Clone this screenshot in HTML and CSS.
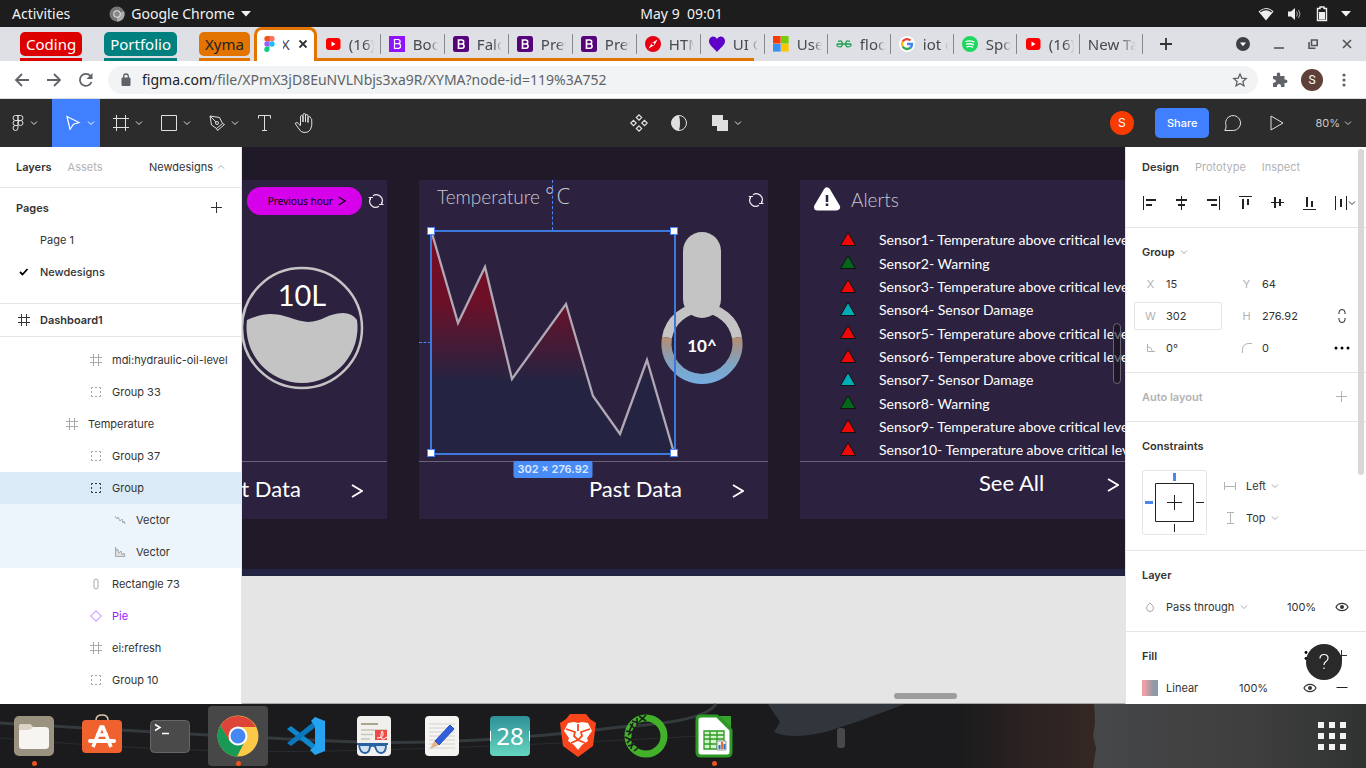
FILE: index.html
```html
<!DOCTYPE html>
<html lang="en">
<head>
<meta charset="utf-8">
<title>XYMA – Figma</title>
<link rel="stylesheet" href="styles.css">
</head>
<body>
<svg class="sprite" aria-hidden="true">
  <symbol id="chev" viewBox="0 0 8 8"><path d="M1 2.500L4 5.500L7 2.500" fill="none" stroke="currentColor"/></symbol>
  <symbol id="chev-up" viewBox="0 0 8 8"><path d="M1 5.500L4 2.500L7 5.500" fill="none" stroke="currentColor"/></symbol>
  <symbol id="plus" viewBox="0 0 12 12"><path d="M5.500 0v11M0 5.500h11" fill="none" stroke="currentColor"/></symbol>
  <symbol id="frame" viewBox="0 0 12 12"><path d="M3.500 0v12M8.500 0v12M0 3.500h12M0 8.500h12" fill="none" stroke="currentColor"/></symbol>
  <symbol id="group" viewBox="0 0 12 12"><path d="M1.500 3V1.500H3M5 1.500h2M9 1.500h1.500V3M10.500 5v2M10.500 9v1.500H9M7 10.500H5M3 10.500H1.500V9M1.500 7V5" fill="none" stroke="currentColor"/></symbol>
  <symbol id="eye" viewBox="0 0 14 10"><path d="M1 5C3.500 .2 10.500 .2 13 5C10.500 9.800 3.500 9.800 1 5Z" fill="none" stroke="currentColor" stroke-width="1.200"/><circle cx="7" cy="5" r="2" fill="currentColor"/></symbol>
  <symbol id="refresh" viewBox="0 0 16 16"><g fill="none" stroke="currentColor" stroke-width="1.200"><path d="M5 2.700A6 6 0 0 1 13.600 10.500M11 13.300A6 6 0 0 1 2.400 5.500"/><path d="M11 11.500H15.500M13.600 9V11.500M.7 4.500H5M2.400 4.500V7"/></g></symbol>
  <symbol id="arrow" viewBox="0 0 12 14"><path d="M1 1L11 7L1 13" fill="none" stroke="currentColor" stroke-width="1.800"/></symbol>
  <symbol id="tri" viewBox="0 0 16 14"><path d="M8 .5L15.500 13.500H.5Z" fill="currentColor" stroke="#111"/></symbol>
  <symbol id="yt" viewBox="0 0 16 16"><rect x="1" y="2" width="14.500" height="12" rx="3" fill="#f00"/><path d="M6.500 5.500L10.500 8L6.500 10.500Z" fill="#fff"/></symbol>
  <symbol id="bs" viewBox="0 0 16 16"><rect width="16" height="16" rx="2.500" fill="#56037c"/><path d="M5.500 4h3.200a2 2 0 0 1 0 4H5.500zM5.500 8h3.500a2.100 2.100 0 0 1 0 4.200H5.500z" fill="none" stroke="#fff" stroke-width="1.600"/></symbol>
  <symbol id="down" viewBox="0 0 10 6"><path d="M0 0H10L5 5.500Z" fill="currentColor"/></symbol>
</svg>

<header class="sysbar">
  <div class="sys-left">
    <button>Activities</button>
    <button class="sys-app"><svg width="16" height="16" viewBox="0 0 16 16"><circle cx="8" cy="8" r="7.500" fill="#777"/><path d="M8 8L15 5A7.500 7.500 0 0 1 8 15.500Z" fill="#aaa"/><circle cx="8" cy="8" r="3.800" fill="#ddd"/><circle cx="8" cy="8" r="2.700" fill="#888"/></svg>Google Chrome<svg width="10" height="6"><use href="#down"/></svg></button>
  </div>
  <button>May 9&nbsp; 09:01</button>
  <div class="sys-right">
    <svg width="16" height="14" viewBox="0 0 16 14"><path d="M.5 4.500Q8-2.500 15.500 4.500L8 13.500Z" fill="#eee"/><path d="M2.300 4.900Q8 .3 13.700 4.900" stroke="#1d1d1d" fill="none" stroke-width="1.200"/></svg>
    <svg width="16" height="14" viewBox="0 0 16 14"><path d="M1 4.500h3L8 1v12L4 9.500H1Z" fill="#eee"/><path d="M9.500 4.500q2 2.500 0 5M11.500 3q3 4 0 8" stroke="#aaa" fill="none"/></svg>
    <svg width="12" height="16" viewBox="0 0 12 16"><path d="M1.500 2.500h2.500v-1.500h4v1.500h2.500v12h-9z" stroke="#eee" fill="none" stroke-width="1.400"/><path d="M3 6h6v7.500H3z" fill="#eee"/></svg>
    <svg width="10" height="6"><use href="#down"/></svg>
  </div>
</header>

<nav class="tabstrip" aria-label="Browser tabs">
  <div class="tabgroup red"><button>Coding</button></div>
  <div class="tabgroup teal"><button>Portfolio</button></div>
  <div class="tabgroup orange"><button>Xyma</button></div>
  <div class="tab-active"><svg width="11" height="16" viewBox="0 0 11 16"><path d="M3 0h3v5.300H3A2.650 2.650 0 0 1 3 0Z" fill="#f24e1e"/><path d="M5.500 0h2.500a2.650 2.650 0 0 1 0 5.300H5.500Z" fill="#ff7262"/><path d="M5.500 5.300H3a2.650 2.650 0 0 0 0 5.300h2.500Z" fill="#a259ff"/><circle cx="8" cy="8" r="2.650" fill="#1abcfe"/><path d="M5.500 10.600H3a2.650 2.650 0 1 0 2.500 2.700Z" fill="#0acf83"/></svg><span class="tab-cut">X</span><button aria-label="Close tab"><svg width="10" height="10" viewBox="0 0 10 10"><path d="M1.500 1.500l7 7M8.500 1.500l-7 7" stroke="#333" stroke-width="1.800"/></svg></button></div>
  <a class="tab grouped" href="#"><svg><use href="#yt"/></svg><span>(16) Y</span></a>
  <a class="tab grouped" href="#"><svg viewBox="0 0 16 16"><path d="M0 0h16v16H0z" fill="#9013fe"/><path d="M5.500 3.500h3.500a2.100 2.100 0 0 1 0 4.200H5.500zM5.500 7.700h3.800a2.300 2.300 0 0 1 0 4.600H5.500z" fill="none" stroke="#fff" stroke-width="1.200"/></svg><span>Boots</span></a>
  <a class="tab grouped" href="#"><svg><use href="#bs"/></svg><span>Falcon</span></a>
  <a class="tab grouped" href="#"><svg><use href="#bs"/></svg><span>Previe</span></a>
  <a class="tab grouped" href="#"><svg><use href="#bs"/></svg><span>Previe</span></a>
  <a class="tab grouped" href="#"><svg viewBox="0 0 16 16"><circle cx="8" cy="8" r="8" fill="#e60012"/><path d="M3.500 12.500L7 7L12.500 3.500L9.500 9Z" fill="#fff"/><circle cx="8" cy="8" r="1.300" fill="#e60012"/></svg><span>HTML</span></a>
  <a class="tab grouped last" href="#"><svg viewBox="0 0 16 16"><path d="M8 16C5 12-.5 9 0 4.500C.8-.5 6.500-.5 8 3C9.500-.5 15.200-.5 16 4.500C16.500 9 11 12 8 16Z" fill="#5f00c8"/></svg><span>UI Gr</span></a>
  <a class="tab" href="#"><svg viewBox="0 0 16 16"><path d="M0 0h7.600v7.600H0z" fill="#f83a04"/><path d="M8 0h7.600v7.600H8z" fill="#7bcc00"/><path d="M0 8h7.600v7.600H0z" fill="#3592f3"/><path d="M8 8h7.600v7.600H8z" fill="#fec400"/></svg><span>User</span></a>
  <a class="tab" href="#"><svg viewBox="0 0 16 16"><path d="M1 8h14M2 5.500q4-2 4.500 2.500q-.5 4-4.500 2.500q-1.500-1-1-2.500M14 5.500q-4-2-4.500 2.500q.5 4 4.500 2.500q1.500-1 1-2.500" fill="none" stroke="#219d50" stroke-width="1.300"/></svg><span>flood</span></a>
  <a class="tab" href="#"><svg viewBox="0 0 16 16"><circle cx="8" cy="8" r="8" fill="#fff"/><g fill="none" stroke-width="2.400"><path d="M3.800 5.500A5 5 0 0 1 11.500 4.500" stroke="#ea4335"/><path d="M3.700 10.500A5 5 0 0 1 3.700 5.500" stroke="#fbbc05"/><path d="M11.500 11.600A5 5 0 0 1 3.700 10.500" stroke="#34a853"/><path d="M8 8h5A5 5 0 0 1 11.300 11.800" stroke="#4285f4"/></g></svg><span>iot da</span></a>
  <a class="tab" href="#"><svg viewBox="0 0 16 16"><circle cx="8" cy="8" r="8" fill="#1ed760"/><path d="M3.500 5.500q5-1.500 9 .8M4 8.200q4.500-1.200 7.800.7M4.500 10.800q3.500-1 6.500.6" fill="none" stroke="#fff" stroke-width="1.300"/></svg><span>Spoti</span></a>
  <a class="tab" href="#"><svg><use href="#yt"/></svg><span>(16) Y</span></a>
  <a class="tab" href="#"><span class="wide">New Tab</span></a>
  <button class="newtab" aria-label="New tab"><svg width="12" height="12" viewBox="0 0 12 12"><path d="M6 0v12M0 6h12" stroke="#333" stroke-width="1.800"/></svg></button>
  <div class="winctl">
    <button aria-label="Search tabs"><svg width="14" height="14" viewBox="0 0 14 14"><circle cx="7" cy="7" r="7" fill="#3c4043"/><path d="M4 5.500h6L7 9.300Z" fill="#fff"/></svg></button>
    <button aria-label="Minimize"><svg width="10" height="10" viewBox="0 0 10 10"><path d="M0 9h10" stroke="#555" stroke-width="1.600"/></svg></button>
    <button aria-label="Restore"><svg width="10" height="10" viewBox="0 0 10 10"><path d="M3.500 1h5.700v5.500H3.500zM1 3v6.200h6.500" fill="none" stroke="#555" stroke-width="1.600"/></svg></button>
    <button aria-label="Close"><svg width="10" height="10" viewBox="0 0 10 10"><path d="M1 1l8 8M9 1l-8 8" stroke="#555" stroke-width="1.700"/></svg></button>
  </div>
</nav>

<div class="urlbar">
  <button aria-label="Back"><svg width="16" height="16" viewBox="0 0 16 16"><path d="M15 8H2M8 2L2 8l6 6" fill="none" stroke="#5f6368" stroke-width="1.800"/></svg></button>
  <button aria-label="Forward"><svg width="16" height="16" viewBox="0 0 16 16"><path d="M1 8h13M8 2l6 6l-6 6" fill="none" stroke="#5f6368" stroke-width="1.800"/></svg></button>
  <button aria-label="Reload"><svg width="16" height="16" viewBox="0 0 16 16"><path d="M13.500 10A6 6 0 1 1 12.500 4" fill="none" stroke="#5f6368" stroke-width="1.800"/><path d="M14.500 1v6h-6Z" fill="#5f6368"/></svg></button>
  <div class="omnibox">
    <svg width="10" height="14" viewBox="0 0 10 14"><path d="M1 5h8v7.500H1z" fill="#5f6368" stroke="#5f6368"/><path d="M2.700 5V3.300a2.300 2.300 0 0 1 4.600 0V5" fill="none" stroke="#5f6368" stroke-width="1.300"/></svg>
    <div class="address"><b>figma.com</b>/file/XPmX3jD8EuNVLNbjs3xa9R/XYMA?node-id=119%3A752</div>
    <button aria-label="Bookmark"><svg width="14" height="14" viewBox="0 0 14 14"><path d="M7 1l1.800 4.100l4.400.4l-3.300 2.900l1 4.400L7 10.500l-3.900 2.300l1-4.400L.8 5.500l4.400-.4Z" fill="none" stroke="#5f6368" stroke-width="1.300"/></svg></button>
  </div>
  <button aria-label="Extensions"><svg width="16" height="16" viewBox="0 0 16 16"><path d="M1 4h4q-1-3.500 1.500-3.500T8 4h4.500v3.500q3-.5 3 1.700t-3 1.800V15H9q.3-3-2-3t-2 3H1v-4q3-.3 3-2t-3-2Z" fill="#5f6368"/></svg></button>
  <button class="profile">S</button>
  <button aria-label="Menu"><svg width="4" height="14" viewBox="0 0 4 14"><g fill="#5f6368"><circle cx="2" cy="2" r="1.600"/><circle cx="2" cy="7" r="1.600"/><circle cx="2" cy="12" r="1.600"/></g></svg></button>
</div>

<div class="toolbar">
  <div class="tools">
    <button class="tool menu" aria-label="Main menu"><svg width="12" height="16" viewBox="0 0 12 16"><path d="M6 .5H3.500a2.500 2.500 0 0 0 0 5H6zM6 .5h2.500a2.500 2.500 0 0 1 0 5H6zM6 5.500H3.500a2.500 2.500 0 0 0 0 5H6zM8.500 5.500a2.500 2.500 0 1 1-2.500 2.500a2.500 2.500 0 0 1 2.500-2.500M6 10.500H3.500a2.500 2.500 0 1 0 2.500 2.500z" fill="none" stroke="currentColor"/></svg><svg class="c"><use href="#chev"/></svg></button>
    <button class="tool on" aria-label="Move"><svg width="16" height="16" viewBox="0 0 16 16"><path d="M2 1.500L14 7.500L8.500 9.200L5 14.300Z" fill="none" stroke="currentColor" stroke-width="1.200"/></svg><svg class="c"><use href="#chev"/></svg></button>
    <button class="tool" aria-label="Frame"><svg width="16" height="16" viewBox="0 0 16 16"><path d="M3.500 0v16M12.500 0v16M0 3.500h16M0 12.500h16" stroke="currentColor"/></svg><svg class="c"><use href="#chev"/></svg></button>
    <button class="tool" aria-label="Rectangle"><svg width="16" height="16" viewBox="0 0 16 16"><path d="M.5.5h15v15H.5z" fill="none" stroke="currentColor"/></svg><svg class="c"><use href="#chev"/></svg></button>
    <button class="tool" aria-label="Pen"><svg width="16" height="16" viewBox="0 0 16 16"><path d="M1 1L2.500 10L7.500 13.500L13.500 8.500L10.500 2.500ZM1 1L7 7M8.500 15.500L15.500 9.500M7.500 13.500l1 2M13.500 8.500l2 1" fill="none" stroke="currentColor"/><circle cx="8" cy="8" r="1.500" fill="none" stroke="currentColor"/></svg><svg class="c"><use href="#chev"/></svg></button>
    <button class="tool solo" aria-label="Text"><svg width="13" height="16" viewBox="0 0 13 16"><path d="M.5 3.500V.5h12v3M6.500 .5v15M4 15.500h5" fill="none" stroke="currentColor"/></svg></button>
    <button class="tool solo" aria-label="Hand"><svg width="20" height="20" viewBox="0 0 20 20"><path d="M6.500 12V4q0-1.500 1.200-1.500T9 4v5V2q0-1.500 1.300-1.500T11.500 2v7V3q0-1.500 1.300-1.500T14 3v6.500V5q0-1.500 1.300-1.500T16.500 5l1.200 1q.8 7-1.200 10.500t-6.500 3q-3 0-5-3.500L1.500 11q-.3-1.500 1.300-1.500T6.500 13" fill="none" stroke="currentColor"/></svg></button>
  </div>
  <div class="tools">
    <button class="tool solo" aria-label="Create component"><svg width="18" height="18" viewBox="0 0 18 18"><path d="M9 .8L11.700 3.500L9 6.200L6.300 3.500ZM9 11.800L11.700 14.500L9 17.200L6.300 14.500ZM3.500 6.300L6.200 9L3.500 11.700L.8 9ZM14.500 6.300L17.200 9L14.500 11.700L11.800 9Z" fill="none" stroke="currentColor" stroke-width="1.200"/></svg></button>
    <button class="tool solo" aria-label="Mask"><svg width="16" height="16" viewBox="0 0 16 16"><circle cx="8" cy="8" r="7.500" fill="none" stroke="currentColor"/><path d="M8 .5a7.500 7.500 0 0 0 0 15Q9 12 9 8T8 .5Z" fill="currentColor"/></svg></button>
    <button class="tool" aria-label="Boolean"><svg width="16" height="16" viewBox="0 0 16 16"><path d="M0 0h11v5h5v11H5v-5H0Z" fill="currentColor"/></svg><svg class="c"><use href="#chev"/></svg></button>
  </div>
  <div class="tools end">
    <button class="user">S</button>
    <button class="share">Share</button>
    <button class="tool comment" aria-label="Comment"><svg width="18" height="16" viewBox="0 0 18 16"><path d="M.8 15.500Q2.500 13 2 10.500A7.500 7.500 0 1 1 9.500 15.500Z" fill="none" stroke="currentColor"/></svg></button>
    <button class="tool play" aria-label="Present"><svg width="14" height="16" viewBox="0 0 14 16"><path d="M1 1L13 8L1 15Z" fill="none" stroke="currentColor"/></svg></button>
    <button class="zoom">80%<svg class="c"><use href="#chev"/></svg></button>
  </div>
</div>

<main class="work">
  <aside class="left">
    <div class="ltabs"><button class="strong">Layers</button><button class="dim">Assets</button><button class="page-pick">Newdesigns<svg class="c"><use href="#chev-up"/></svg></button></div>
    <section class="pages">
      <h2>Pages<button aria-label="Add page"><svg width="12" height="12"><use href="#plus"/></svg></button></h2>
      <button class="page">Page 1</button>
      <button class="page current"><svg width="10" height="8" viewBox="0 0 10 8"><path d="M1 4l2.500 2.500L8.500 1" fill="none" stroke="#000" stroke-width="1.800"/></svg>Newdesigns</button>
    </section>
    <button class="layer top"><svg><use href="#frame"/></svg>Dashboard1</button>
    <div class="layers">
      <button class="layer d3"><svg><use href="#frame"/></svg>mdi:hydraulic-oil-level</button>
      <button class="layer d3"><svg><use href="#group"/></svg>Group 33</button>
      <button class="layer d2"><svg><use href="#frame"/></svg>Temperature</button>
      <button class="layer d3"><svg><use href="#group"/></svg>Group 37</button>
      <button class="layer d3 picked"><svg><use href="#group"/></svg>Group</button>
      <button class="layer d4 within"><svg viewBox="0 0 12 12"><path d="M1 2l2 3l1-2l2 4l2-2l1 4l1-2l1 3" fill="none" stroke="currentColor"/></svg>Vector</button>
      <button class="layer d4 within"><svg viewBox="0 0 12 12"><path d="M1.500 1v9.500h9.500L10 7L8.500 9L7 5L5 7L3.500 3L2.500 5Z" fill="#ddd" stroke="currentColor"/></svg>Vector</button>
      <button class="layer d3"><svg viewBox="0 0 12 12"><rect x="4" y="1" width="4" height="10" rx="2" fill="none" stroke="currentColor"/></svg>Rectangle 73</button>
      <button class="layer d3 comp"><svg viewBox="0 0 12 12"><path d="M6 .7L11.300 6L6 11.300L.7 6Z" fill="none" stroke="currentColor" stroke-width="1.300"/></svg>Pie</button>
      <button class="layer d3"><svg><use href="#frame"/></svg>ei:refresh</button>
      <button class="layer d3"><svg><use href="#group"/></svg>Group 10</button>
    </div>
  </aside>

  <div class="canvas">
    <div class="board">
      <article class="card">
        <header class="card-head end"><button class="pill">Previous hour<svg width="8" height="10"><use href="#arrow"/></svg></button><svg class="sync"><use href="#refresh"/></svg></header>
        <div class="card-body level">
          <svg width="124" height="124" viewBox="0 0 124 124"><circle cx="62" cy="62" r="60" fill="none" stroke="#c4c4c4" stroke-width="2.500"/><path d="M7 54C22 47 33 47 44 50C55 53 58 55 68 56C82 56 88 47 103 47Q112 47 117 54A55.500 55.500 0 1 1 7 54Z" fill="#c4c4c4"/><text x="62" y="40" class="liters">10L</text></svg>
        </div>
        <footer class="card-foot"><span>Past Data</span><svg><use href="#arrow"/></svg></footer>
      </article>

      <article class="card">
        <header class="card-head"><h3>Temperature <span class="unit"><span>°</span>C</span></h3><svg class="sync"><use href="#refresh"/></svg></header>
        <div class="card-body temp">
          <svg class="chart" width="244" height="223" viewBox="0 0 244 223">
            <defs><linearGradient id="heat" x1="0" y1="0" x2="0" y2="1"><stop offset="0" stop-color="#7a0b23"/><stop offset=".32" stop-color="#6c1028"/><stop offset=".68" stop-color="#242442"/><stop offset="1" stop-color="#242442"/></linearGradient></defs>
            <path d="M0 0L27 93L54 37L81 149L135 74L162 166L189 204L216 130L243 223H0Z" fill="url(#heat)"/>
            <path d="M0 0L27 93L54 37L81 149L135 74L162 166L189 204L216 130L243 223" fill="none" stroke="#b0a8b4" stroke-width="2.300"/>
          </svg>
          <svg class="thermo" width="82" height="156" viewBox="0 0 82 156">
            <defs><linearGradient id="cool" gradientUnits="userSpaceOnUse" x1="0" y1="107" x2="0" y2="153"><stop offset="0" stop-color="#b68e70"/><stop offset=".3" stop-color="#98989c"/><stop offset=".65" stop-color="#7ca6c8"/><stop offset="1" stop-color="#76ace0"/></linearGradient></defs>
            <path d="M6 107.500A35.500 35.500 0 0 1 76 107.500" fill="none" stroke="#c4c4c4" stroke-width="10"/>
            <path d="M6 107.500A35.500 35.500 0 1 0 76 107.500" fill="none" stroke="url(#cool)" stroke-width="10"/>
            <rect x="22" y="2" width="38" height="86" rx="19" fill="#c4c4c4"/>
            <text x="41" y="122" class="degrees">10^</text>
          </svg>
        </div>
        <footer class="card-foot"><span>Past Data</span><svg><use href="#arrow"/></svg></footer>
        <div class="guide-v"></div><div class="guide-h"></div>
        <div class="selection"><i></i><i></i><i></i><i></i><output>302 × 276.92</output></div>
      </article>

      <article class="card alerts">
        <header class="card-head"><svg width="28" height="24" viewBox="0 0 28 24"><path d="M14 3L23.500 19H4.500Z" fill="#fff" stroke="#fff" stroke-width="7" stroke-linejoin="round"/><path d="M14 7v7M14 15.500v2.500" stroke="#2c2240" stroke-width="2.500"/></svg><h3>Alerts</h3></header>
        <ul class="card-body">
          <li class="crit"><svg><use href="#tri"/></svg>Sensor1- Temperature above critical level</li>
          <li class="warn"><svg><use href="#tri"/></svg>Sensor2- Warning</li>
          <li class="crit"><svg><use href="#tri"/></svg>Sensor3- Temperature above critical level</li>
          <li class="dmg"><svg><use href="#tri"/></svg>Sensor4- Sensor Damage</li>
          <li class="crit"><svg><use href="#tri"/></svg>Sensor5- Temperature above critical level</li>
          <li class="crit"><svg><use href="#tri"/></svg>Sensor6- Temperature above critical level</li>
          <li class="dmg"><svg><use href="#tri"/></svg>Sensor7- Sensor Damage</li>
          <li class="warn"><svg><use href="#tri"/></svg>Sensor8- Warning</li>
          <li class="crit"><svg><use href="#tri"/></svg>Sensor9- Temperature above critical level</li>
          <li class="crit"><svg><use href="#tri"/></svg>Sensor10- Temperature above critical level</li>
        </ul>
        <footer class="card-foot"><span>See All</span><svg><use href="#arrow"/></svg></footer>
      </article>
    </div>
    <div class="vscroll"></div>
    <div class="hscroll"></div>
  </div>

  <aside class="right">
    <div class="rtabs"><button class="strong">Design</button><button class="dim">Prototype</button><button class="dim">Inspect</button></div>
    <div class="align">
      <button aria-label="Align left"><svg viewBox="0 0 14 14"><path d="M1.500 0v14" stroke="#222"/><path d="M4 4h10M4 9h6" stroke="#222" stroke-width="2"/></svg></button>
      <button aria-label="Align horizontal centers"><svg viewBox="0 0 14 14"><path d="M7.500 0v14" stroke="#222"/><path d="M2 4h11M4 9h7" stroke="#222" stroke-width="2"/></svg></button>
      <button aria-label="Align right"><svg viewBox="0 0 14 14"><path d="M13.500 0v14" stroke="#222"/><path d="M1 4h10M5 9h6" stroke="#222" stroke-width="2"/></svg></button>
      <button aria-label="Align top"><svg viewBox="0 0 14 14"><path d="M1 .5h13" stroke="#222"/><path d="M5 3v10M10 3v6" stroke="#222" stroke-width="2"/></svg></button>
      <button aria-label="Align vertical centers"><svg viewBox="0 0 14 14"><path d="M1 6.500h13" stroke="#222"/><path d="M5 1v11M10 3v7" stroke="#222" stroke-width="2"/></svg></button>
      <button aria-label="Align bottom"><svg viewBox="0 0 14 14"><path d="M1 13.500h13" stroke="#222"/><path d="M5 1v10M10 5v6" stroke="#222" stroke-width="2"/></svg></button>
      <button aria-label="Distribute"><svg viewBox="0 0 14 14"><path d="M1.500 0v14M12.500 0v14" stroke="#222"/><path d="M7 3v8" stroke="#222" stroke-width="2"/></svg><svg class="c"><use href="#chev"/></svg></button>
    </div>
    <section>
      <h2><button class="strong">Group<svg class="c"><use href="#chev"/></svg></button></h2>
      <div class="fields">
        <label><span>X</span><input value="15"></label>
        <label><span>Y</span><input value="64"></label><i></i>
        <label class="boxed"><span>W</span><input value="302"></label>
        <label><span>H</span><input value="276.92"></label>
        <button aria-label="Constrain proportions"><svg width="8" height="14" viewBox="0 0 8 14"><path d="M1 5V3.500a3 3 0 0 1 6 0V5M1 9v1.500a3 3 0 0 0 6 0V9" fill="none" stroke="#222"/></svg></button>
        <label><span><svg width="8" height="8" viewBox="0 0 8 8"><path d="M.5 0v7.500H8M.5 2.500Q5 3.500 5.500 7.500" fill="none" stroke="currentColor"/></svg></span><input value="0°" aria-label="Rotation"></label>
        <label><span><svg width="10" height="10" viewBox="0 0 10 10"><path d="M.5 10V7Q.5.500 7 .5H10" fill="none" stroke="currentColor"/></svg></span><input value="0" aria-label="Corner radius"></label>
        <button aria-label="More"><svg width="16" height="4" viewBox="0 0 16 4"><circle cx="2" cy="2" r="1.500"/><circle cx="8" cy="2" r="1.500"/><circle cx="14" cy="2" r="1.500"/></svg></button>
      </div>
    </section>
    <section><h2 class="dim">Auto layout<button aria-label="Add auto layout"><svg width="12" height="12"><use href="#plus"/></svg></button></h2></section>
    <section>
      <h2>Constraints</h2>
      <div class="constraints">
        <svg width="65" height="65" viewBox="0 0 65 65"><rect x=".5" y=".5" width="64" height="64" rx="2" fill="#fff" stroke="#e5e5e5"/><path d="M13.500 13.500h38v38h-38zM32.500 25v15M25 32.500h15M32.500 54v8M54 32.500h8" fill="none" stroke="#222"/><path d="M32.500 3v8M3 32.500h8" stroke="#4a86f7" stroke-width="3"/></svg>
        <div>
          <label><svg width="12" height="12" viewBox="0 0 12 12"><path d="M.5 2v8M11.500 2v8M.5 6.500h11" stroke="#b3b3b3"/></svg><select aria-label="Horizontal"><option>Left</option></select><svg class="c"><use href="#chev"/></svg></label>
          <label><svg width="12" height="12" viewBox="0 0 12 12"><path d="M3 .5h7M3 11.500h7M6.500 .5v11" stroke="#b3b3b3"/></svg><select aria-label="Vertical"><option>Top</option></select><svg class="c"><use href="#chev"/></svg></label>
        </div>
      </div>
    </section>
    <section>
      <h2>Layer</h2>
      <div class="row"><span class="slot"><svg width="8" height="10" viewBox="0 0 8 10"><path d="M4 .8Q.5 4 .5 6a3.500 3.500 0 0 0 7 0Q7.500 4 4 .8Z" fill="none" stroke="#aaa"/></svg></span><label><select aria-label="Blend mode"><option>Pass through</option></select><svg class="c"><use href="#chev"/></svg></label><input class="opacity" value="100%" aria-label="Layer opacity"><button aria-label="Visible"><svg width="14" height="10"><use href="#eye"/></svg></button></div>
    </section>
    <section>
      <h2>Fill<span class="fill-actions"><svg width="12" height="12" viewBox="0 0 12 12"><circle cx="2" cy="2.500" r="1.400"/><circle cx="2" cy="8.500" r="1.400"/><circle cx="8" cy="2.500" r="1.400"/><circle cx="8" cy="8.500" r="1.400"/></svg><button aria-label="Add fill"><svg width="12" height="12"><use href="#plus"/></svg></button></span></h2>
      <div class="row fill"><span class="slot"><i class="swatch"></i></span><span>Linear</span><input class="opacity" value="100%" aria-label="Fill opacity"><button aria-label="Visible"><svg width="14" height="10"><use href="#eye"/></svg></button><button aria-label="Remove"><svg width="12" height="12" viewBox="0 0 12 12"><path d="M.5 5.500h11" stroke="#222"/></svg></button></div>
    </section>
    <div class="pscroll"></div>
    <button class="help" aria-label="Help"><svg width="12" height="18" viewBox="0 0 12 18"><path d="M2 5.500Q2 1.500 6 1.500T10 5Q10 7.500 8 8.500T6 12M6 14.500v1.500" fill="none" stroke="#fff" stroke-width="1.200"/></svg></button>
  </aside>
</main>

<footer class="dock">
  <svg class="wall" viewBox="0 0 1366 64" preserveAspectRatio="none" aria-hidden="true">
    <defs><linearGradient id="rust"><stop offset="0" stop-color="#1c1c1d"/><stop offset=".45" stop-color="#2b2221"/><stop offset="1" stop-color="#352724"/></linearGradient><linearGradient id="stone"><stop offset="0" stop-color="#464749"/><stop offset=".6" stop-color="#3e3e3e"/><stop offset="1" stop-color="#303232"/></linearGradient></defs>
    <path d="M0 0h1366v64H0z" fill="#1b1b1d"/>
    <path d="M0 19Q200 31 330 37T620 23Q705 18 716 0" fill="none" stroke="#33393d" stroke-width="3"/>
    <path d="M0 34Q180 50 330 47T700 32" fill="none" stroke="#282d30"/>
    <path d="M768 0H905L862 16L826 28Q790 36 774 28L780 18Z" fill="#30363b"/>
    <rect x="837" y="24" width="8" height="20" rx="3" fill="#48484b"/>
    <path d="M965 0h129l1 18l-2 14l3 12l-3 20H965Z" fill="url(#rust)"/>
    <path d="M1094 0h272v64h-273l3-20l-3-12l2-14Z" fill="url(#stone)"/>
  </svg>
  <div class="apps">
    <button class="run" aria-label="Files"><svg viewBox="0 0 42 42"><rect x="1" y="1" width="40" height="40" rx="5" fill="#9a927f"/><path d="M6 12q0-3 3-3h8l3 3h12q4 0 4 3v16q0 3-4 3H9q-3 0-3-3Z" fill="#f7f5f2"/><path d="M6 15V12q0-3 3-3h8l3 4l-4 2Z" fill="#dcd3c5"/></svg></button>
    <button aria-label="Software"><svg viewBox="0 0 42 42"><path d="M15 9V5q0-5 6-5t6 5v4" fill="none" stroke="#dcc8a8" stroke-width="1.500"/><rect x="1" y="5" width="40" height="33" rx="4" fill="#f0622d"/><path d="M12 32L20 12h2L30 32M15 20h12" fill="none" stroke="#fff" stroke-width="3.500"/><path d="M9 26h24" stroke="#fff" stroke-width="4" stroke-linecap="round"/></svg></button>
    <button aria-label="Terminal"><svg viewBox="0 0 42 42"><rect x="1.500" y="5.500" width="39" height="32" rx="4" fill="#4a4a4a" stroke="#666"/><path d="M6 9.500l5 3l-5 3M13 18.500h7" fill="none" stroke="#fff" stroke-width="1.500"/></svg></button>
    <button class="run focus" aria-label="Chrome"><svg viewBox="0 0 42 42"><circle cx="21" cy="21" r="20.500" fill="#fbc847"/><path d="M3.500 10.500A20.500 20.500 0 0 1 39 12H21L12 26Z" fill="#de4437"/><path d="M3.500 10.500L12.500 26L21 30L27 28L20 41.500A20.500 20.500 0 0 1 3.500 10.500Z" fill="#189a56"/><circle cx="21" cy="21" r="9.500" fill="#fff"/><circle cx="21" cy="21" r="7.500" fill="#4587f3"/></svg></button>
    <button aria-label="VS Code"><svg viewBox="0 0 42 42"><path d="M2 14L6 11L32 31V38Z" fill="#0f87d0"/><path d="M2 28L6 31L32 11V4Z" fill="#0877bd"/><path d="M30 2L40 6V36L30 40L25 35L30 31V11L26 6Z" fill="#26a4f2"/></svg></button>
    <button aria-label="Document viewer"><svg viewBox="0 0 42 42"><rect x="4" y="1" width="34" height="40" rx="4" fill="#f1f0ed"/><path d="M8 9h17" stroke="#aaa58f" stroke-width="2"/><path d="M8 15h26M8 19.500h12M8 24h9" stroke="#c8c5b9" stroke-width="1.500"/><path d="M22 15h12v10H22z" fill="#f04a45"/><path d="M24 23q7 0 6-5t-2 2t6 2" fill="none" stroke="#fff"/><path d="M6 30h11q0 8-5 8t-6-8zM22 30h11q0 8-5 8t-6-8zM4 29h31M17 32q3-3 5 0" fill="#d4e3f2" stroke="#2761a1" stroke-width="1.800"/></svg></button>
    <button aria-label="Text editor"><svg viewBox="0 0 42 42"><rect x="4" y="1" width="34" height="40" rx="4" fill="#f5f4f1"/><path d="M8 9h26M8 13h26M8 17h26M8 21h26M8 25h26M8 29h26M8 33h26" stroke="#d2d2d2"/><path d="M14 26L29 10L33 14L18 30Z" fill="#315fdb" stroke="#2449ba"/><path d="M9 34L13 26L18 30Z" fill="#e4b58b"/></svg></button>
    <button aria-label="Calendar"><svg viewBox="0 0 42 42"><defs><linearGradient id="cal" x1="0" y1="0" x2="0" y2="1"><stop offset="0" stop-color="#2e9097"/><stop offset="1" stop-color="#66d6c0"/></linearGradient></defs><rect x="1" y="1" width="40" height="40" rx="4" fill="url(#cal)"/><path d="M1.500 16v10M40.500 16v10" stroke="#fff"/><text x="21" y="30" class="day">28</text></svg></button>
    <button aria-label="Brave"><svg viewBox="0 0 42 42"><path d="M13-1H29L33 4L39 8L36 31L21 42L6 31L3 8L9 4Z" fill="#f9451c"/><path d="M11 8L17 7l4 1l4-1l6 1l4 8l-5 7l1 3l-6 4l-4 5l-4-5l-6-4l1-3l-5-7Z" fill="#fff"/><path d="M9 14l9 3l-1 4l4 4l4-4l-1-4l9-3M21 9v7M14 28l7-3l7 3" fill="none" stroke="#f9451c" stroke-width="1.800"/></svg></button>
    <button aria-label="Anaconda"><svg viewBox="0 0 42 42"><circle cx="21" cy="21" r="18" fill="none" stroke="#43b02a" stroke-width="7"/><path d="M21 0L14 7M14 1L21 6M12 3v8M7 6l7 2M5 9l5 5M8 8L4 17M1 16l8 2M3 20l6-5M0 22l8 4M2 28l6-6M3 31l8-2M6 34l2-9M9 36l5-4" stroke="#1b1b1d" stroke-width="1.600"/></svg></button>
    <button class="run" aria-label="LibreOffice Calc"><svg viewBox="0 0 42 42"><path d="M8 1H24L38 15V37q0 4-4 4H8q-4 0-4-4V5q0-4 4-4Z" fill="#fff" stroke="#2b9a25" stroke-width="3"/><path d="M26 1H38V13Z" fill="#36a52e"/><path d="M11 16h20v18H11z" fill="#d4f4c8"/><path d="M11 16h20v18H11zM11 20h20M11 24h20M11 29h20M17 16v18M24 16v18" fill="none" stroke="#2b9a25" stroke-width="1.300"/><path d="M24 26h9v9h-9z" fill="#eee" stroke="#999"/><path d="M25.500 34v-4h2v4z" fill="#1978c9"/><path d="M28 34v-7h2v7z" fill="#ef6a2a"/><path d="M30.500 34v-5h2v5z" fill="#1978c9"/></svg></button>
  </div>
  <button class="grid" aria-label="Show applications"><svg width="28" height="28" viewBox="0 0 28 28"><path d="M3 0v28M14 0v28M25 0v28" stroke="#f2f2f2" stroke-width="6" stroke-dasharray="6 5"/></svg></button>
</footer>
</body>
</html>
```
FILE: styles.css
```css
* { box-sizing: border-box; }
body {
  margin: 0;
  height: 100vh;
  display: flex;
  flex-direction: column;
  overflow: hidden;
  font: 11px/16px Inter, "Liberation Sans", sans-serif;
  color: #333;
}
button, input, select {
  font: inherit;
  color: inherit;
  background: none;
  border: 0;
  margin: 0;
  padding: 0;
  appearance: none;
  text-align: left;
}
h2, h3, ul { margin: 0; padding: 0; font: inherit; list-style: none; }
svg { flex: none; display: block; overflow: visible; }
.sprite { position: absolute; width: 0; height: 0; }
.c { width: 8px; height: 8px; }
.strong { font-weight: 600; }
.dim { color: #b3b3b3; }

/* System bar */
.sysbar {
  height: 27px;
  flex: none;
  display: grid;
  grid-template-columns: 1fr auto 1fr;
  align-items: center;
  padding: 0 15px 0 12px;
  background: #1d1d1d;
  color: #f2f2f2;
  font: 14px/20px "Noto Sans", sans-serif;
}
.sys-left, .sys-right, .sys-app { display: flex; align-items: center; }
.sys-left { gap: 39px; }
.sys-app { gap: 6px; }
.sys-right { justify-content: flex-end; gap: 13px; }

/* Browser tabs */
.tabstrip {
  height: 34px;
  flex: none;
  display: flex;
  padding-left: 20px;
  background: #dee0e6;
  color: #45484c;
  font: 15px/20px "Noto Sans", sans-serif;
}
.tabgroup { margin-right: 22px; padding-top: 5px; border-bottom: 3px solid; }
.tabgroup button { height: 24px; padding: 0 6px; border-radius: 5px; color: #fff; display: block; }
.red { border-color: #d00; }
.red button { background: #d00; }
.teal { border-color: #00807f; }
.teal button { background: #00807f; }
.orange { border-color: #e37400; margin-right: 4px; }
.orange button { background: #e37400; color: #222; }
.tab-active {
  width: 63px;
  display: flex;
  align-items: center;
  gap: 8px;
  padding: 0 0 3px 7px;
  border: 3px solid #e37400;
  border-bottom: 0;
  border-radius: 8px 8px 0 0;
  background: #fff;
}
.tab-cut { width: 7px; overflow: hidden; direction: rtl; }
.tab {
  width: 63px;
  display: flex;
  align-items: center;
  gap: 8px;
  padding: 3px 0 3px 8px;
  color: inherit;
  text-decoration: none;
  background: linear-gradient(#888, #888) right 7px / 1px 20px no-repeat;
}
.tab svg { width: 16px; height: 16px; }
.tab span {
  width: 25px;
  overflow: hidden;
  white-space: nowrap;
  mask-image: linear-gradient(90deg, #000 65%, transparent);
}
.tab .wide { width: 48px; }
.grouped {
  width: 64px;
  background:
    linear-gradient(#888, #888) right 7px / 1px 20px no-repeat,
    linear-gradient(#e37400, #e37400) left bottom / 64px 3px no-repeat;
}
.last { background-size: 1px 20px, 53px 3px; }
.newtab { padding: 0 17px; }
.winctl { margin-left: auto; padding-right: 14px; display: flex; align-items: center; gap: 24px; }

/* Address bar */
.urlbar {
  height: 38px;
  flex: none;
  display: flex;
  align-items: center;
  padding: 0 20px 0 14px;
  gap: 16px;
  background: #fff;
  border-bottom: 1px solid #dadce0;
}
.omnibox {
  flex: 1;
  height: 28px;
  display: flex;
  align-items: center;
  gap: 11px;
  margin: 0 -2px;
  padding: 0 11px 0 13px;
  border-radius: 14px;
  background: #f1f3f4;
  font: 14px/20px "Noto Sans", sans-serif;
  color: #5f6368;
}
.address { flex: 1; }
.address b { font-weight: 400; color: #202124; }
.profile { width: 22px; height: 22px; margin: 0 3px 0 -3px; border-radius: 50%; background: #5d4037; color: #fff; text-align: center; font: 12px/22px Roboto, sans-serif; }

/* Editor toolbar */
.toolbar {
  height: 48px;
  flex: none;
  display: grid;
  grid-template-columns: 1fr auto 1fr;
  background: #2c2c2c;
  color: #e0e0e0;
}
.tools { display: flex; align-items: center; }
.tool { width: 48px; height: 48px; display: flex; align-items: center; justify-content: center; gap: 6px; padding-left: 5px; }
.tool .c { margin-right: -3px; }
.menu { width: 52px; padding: 0 5px 0 0; }
.on { background: #4080ff; color: #fff; }
.solo { width: 40px; padding: 0; }
.end { justify-content: flex-end; }
.user { width: 24px; height: 24px; border-radius: 50%; background: #f93b00; color: #fff; text-align: center; font-size: 12px; }
.share { height: 30px; margin-left: 21px; padding: 0 12px; border-radius: 5px; background: #4080ff; color: #fff; font-weight: 500; }
.comment { width: 48px; padding: 0; }
.play { width: 40px; padding: 0; }
.zoom { display: flex; align-items: center; gap: 4px; padding: 0 14px 0 18px; color: #c8c8c8; }

/* Workspace */
.work { flex: 1; min-height: 0; display: flex; background: #e5e5e5; }
.left, .right { width: 242px; flex: none; background: #fff; overflow: hidden; }
.left { border-right: 1px solid #e5e5e5; }
.ltabs { display: flex; align-items: center; gap: 16px; height: 41px; padding: 0 16px; border-bottom: 1px solid #e5e5e5; }
.page-pick { margin-left: auto; display: flex; align-items: center; gap: 4px; }
.page-pick .c, h2 .c, .right select + .c { color: #aaa; }
.pages { padding: 4px 0 15px; border-bottom: 1px solid #e5e5e5; }
h2 { height: 32px; display: flex; align-items: center; justify-content: space-between; padding: 0 18px 0 16px; font-weight: 600; }
.page { width: 100%; height: 32px; display: flex; align-items: center; padding-left: 40px; }
.current { padding-left: 19px; gap: 11px; font-weight: 500; }
.layer { width: 100%; height: 32px; display: flex; align-items: center; gap: 10px; white-space: nowrap; }
.layer svg { width: 12px; height: 12px; color: #aaa; }
.layer.top { height: 33px; padding-left: 18px; font-weight: 600; border-bottom: 1px solid #e5e5e5; }
.layer.top svg, .picked svg { color: #333; }
.layers { padding-top: 7px; }
.d2 { padding-left: 66px; }
.d3 { padding-left: 90px; }
.d4 { padding-left: 114px; }
.picked { background: #daebf7; }
.within { background: #edf5fc; }
.comp { color: #9b16ff; }
.comp svg { color: #d7b1ff; }

/* Design canvas */
.canvas { flex: 1; min-width: 0; position: relative; overflow: hidden; border-bottom: 1px solid #aaa; }
.board {
  width: max-content;
  display: flex;
  gap: 32px;
  margin-left: -204px;
  padding: 33px 0 50px;
  background: #201a28;
  border-bottom: 7px solid #232343;
  color: #fff;
  font-family: Lato, sans-serif;
}
.card { position: relative; width: 349px; height: 339px; display: flex; flex-direction: column; background: #2c2240; }
.card-head { height: 40px; display: flex; align-items: center; justify-content: space-between; padding: 0 4px 8px 18px; color: #c9c6cf; }
.card-head.end { justify-content: flex-end; gap: 6px; padding: 2px 3px 0 0; }
.card h3 { font-size: 19px; line-height: 24px; font-weight: 300; }
.unit { font: 300 22px/24px "Open Sans", sans-serif; }
.unit span { margin-right: 2px; }
.sync { width: 16px; height: 16px; color: #eee; }
.card-head:not(.end) .sync { margin-top: 8px; }
.pill { display: flex; align-items: center; gap: 5px; height: 28px; padding: 0 16px 0 21px; border-radius: 14px; background: #d600eb; color: #000; font: 10px/16px "Noto Sans", sans-serif; }
.card-body { flex: 1; min-height: 0; }
.level { display: flex; justify-content: center; align-items: center; padding: 0 0 26px 178px; }
.liters { font-size: 29px; fill: #fff; text-anchor: middle; }
.temp { display: flex; align-items: flex-start; padding: 10px 26px 0 12px; justify-content: space-between; }
.degrees { font-size: 17px; font-weight: 700; fill: #fff; text-anchor: middle; }
.thermo { margin-left: -14px; }
.card-foot { height: 58px; display: flex; align-items: center; justify-content: space-between; padding: 0 24px 0 170px; border-top: 1px solid #6b6378; font-size: 22px; line-height: 30px; }
.card-foot span { margin-bottom: 4px; }
.card-foot svg { width: 12px; height: 14px; }
.alerts .card-head { justify-content: flex-start; gap: 10px; padding: 0 0 0 13px; }
.alerts .card-body { padding: 8px 0 0 40px; }
.alerts li { height: 23px; display: flex; align-items: center; gap: 23px; font-size: 14px; line-height: 23px; white-space: nowrap; }
.alerts li:nth-child(3n+2) { height: 24px; }
.alerts li svg { width: 16px; height: 14px; margin-bottom: 2px; }
.crit svg { color: #f00808; }
.warn svg { color: #05651c; }
.dmg svg { color: #00abb8; }
.alerts .card-foot { padding: 0 30px 12px 179px; }

/* Selection overlay */
.selection { position: absolute; left: 11px; top: 50px; width: 246px; height: 225px; border: 2px solid #3d78dc; }
.selection i { position: absolute; width: 8px; height: 8px; background: #fff; border: 1px solid #4a86f7; }
.selection i:nth-child(1) { left: -5px; top: -5px; }
.selection i:nth-child(2) { right: -4px; top: -5px; }
.selection i:nth-child(3) { left: -5px; bottom: -4px; }
.selection i:nth-child(4) { right: -4px; bottom: -4px; }
.selection output { position: absolute; top: 229px; left: 50%; transform: translateX(-50%); padding: 0 4px; border-radius: 2px; background: #4a8cf7; color: #dce9ff; font: 600 11px/17px Inter, sans-serif; white-space: nowrap; }
.guide-v { position: absolute; left: 133px; top: 0; height: 50px; border-left: 1px dashed #4a86f7; }
.guide-h { position: absolute; left: 0; top: 162px; width: 12px; border-top: 1px dashed #4a86f7; }
.vscroll { position: absolute; right: 4px; top: 176px; width: 8px; height: 61px; border-radius: 4px; border: 1px solid #69636f; background: rgba(20, 16, 26, .6); }
.hscroll { position: absolute; right: 168px; bottom: 4px; width: 63px; height: 6px; border-radius: 3px; background: #9d9d9d; }

/* Properties panel */
.right { position: relative; width: 241px; border-left: 1px solid #e5e5e5; }
.rtabs { height: 40px; display: flex; align-items: center; gap: 16px; padding-left: 16px; }
.align { height: 32px; display: flex; align-items: center; padding-left: 16px; gap: 18px; }
.align svg:first-child { width: 14px; height: 14px; }
.align button { display: flex; align-items: center; }
.align + section { margin-top: 8px; }
.right section { padding: 8px 0; border-top: 1px solid #e5e5e5; }
h2 > button { display: flex; align-items: center; gap: 5px; }
.fields { display: grid; grid-template-columns: 96px 96px 32px; padding-left: 8px; }
.fields label { height: 28px; margin: 2px 8px 2px 0; display: flex; align-items: center; border: 1px solid transparent; border-radius: 2px; }
.fields .boxed { border-color: #e5e5e5; }
.fields span { width: 31px; display: flex; justify-content: center; color: #b3b3b3; }
.fields input { width: 54px; }
.fields button { display: flex; align-items: center; justify-content: center; }
.constraints { display: flex; gap: 17px; height: 80px; padding: 8px 0 0 16px; }
.constraints label { height: 32px; display: flex; align-items: center; }
.constraints select { margin-left: 10px; }
select + .c { margin-left: 5px; }
.row { height: 32px; display: flex; align-items: center; padding-right: 17px; }
.slot { width: 40px; display: flex; justify-content: center; padding-left: 8px; }
.row label { display: flex; align-items: center; }
.opacity { width: 36px; margin-left: auto; margin-right: 12px; }
.row.fill { padding-right: 18px; }
.fill .opacity { margin-right: 28px; }
.fill button + button { margin-left: 19px; }
.swatch { width: 16px; height: 16px; background: linear-gradient(90deg, #eda0a4 15%, #8f9aa8 70%); }
.fill-actions { display: flex; gap: 20px; }
.pscroll { position: absolute; right: 2px; top: 2px; width: 6px; height: 326px; border-radius: 3px; background: #d8d8d8; }
.help { position: absolute; right: 24px; bottom: 24px; width: 36px; height: 36px; border-radius: 50%; background: #2a2a2a; display: flex; align-items: center; justify-content: center; }

/* Dock */
.dock { position: relative; isolation: isolate; height: 64px; flex: none; display: flex; justify-content: space-between; align-items: center; padding-right: 20px; background: #1b1b1d; }
.wall { position: absolute; z-index: -1; inset: 0; width: 100%; height: 100%; }
.apps { display: flex; gap: 8px; padding-left: 4px; }
.apps button { position: relative; width: 60px; height: 60px; border-radius: 4px; display: flex; align-items: center; justify-content: center; }
.apps svg { width: 42px; height: 42px; }
.focus { background: #474747; }
.run::after { content: ""; position: absolute; bottom: 0; left: 28px; width: 5px; height: 5px; border-radius: 50%; background: #e95420; }
.day { font: 24px "Noto Sans", sans-serif; fill: #fff; text-anchor: middle; }
```
